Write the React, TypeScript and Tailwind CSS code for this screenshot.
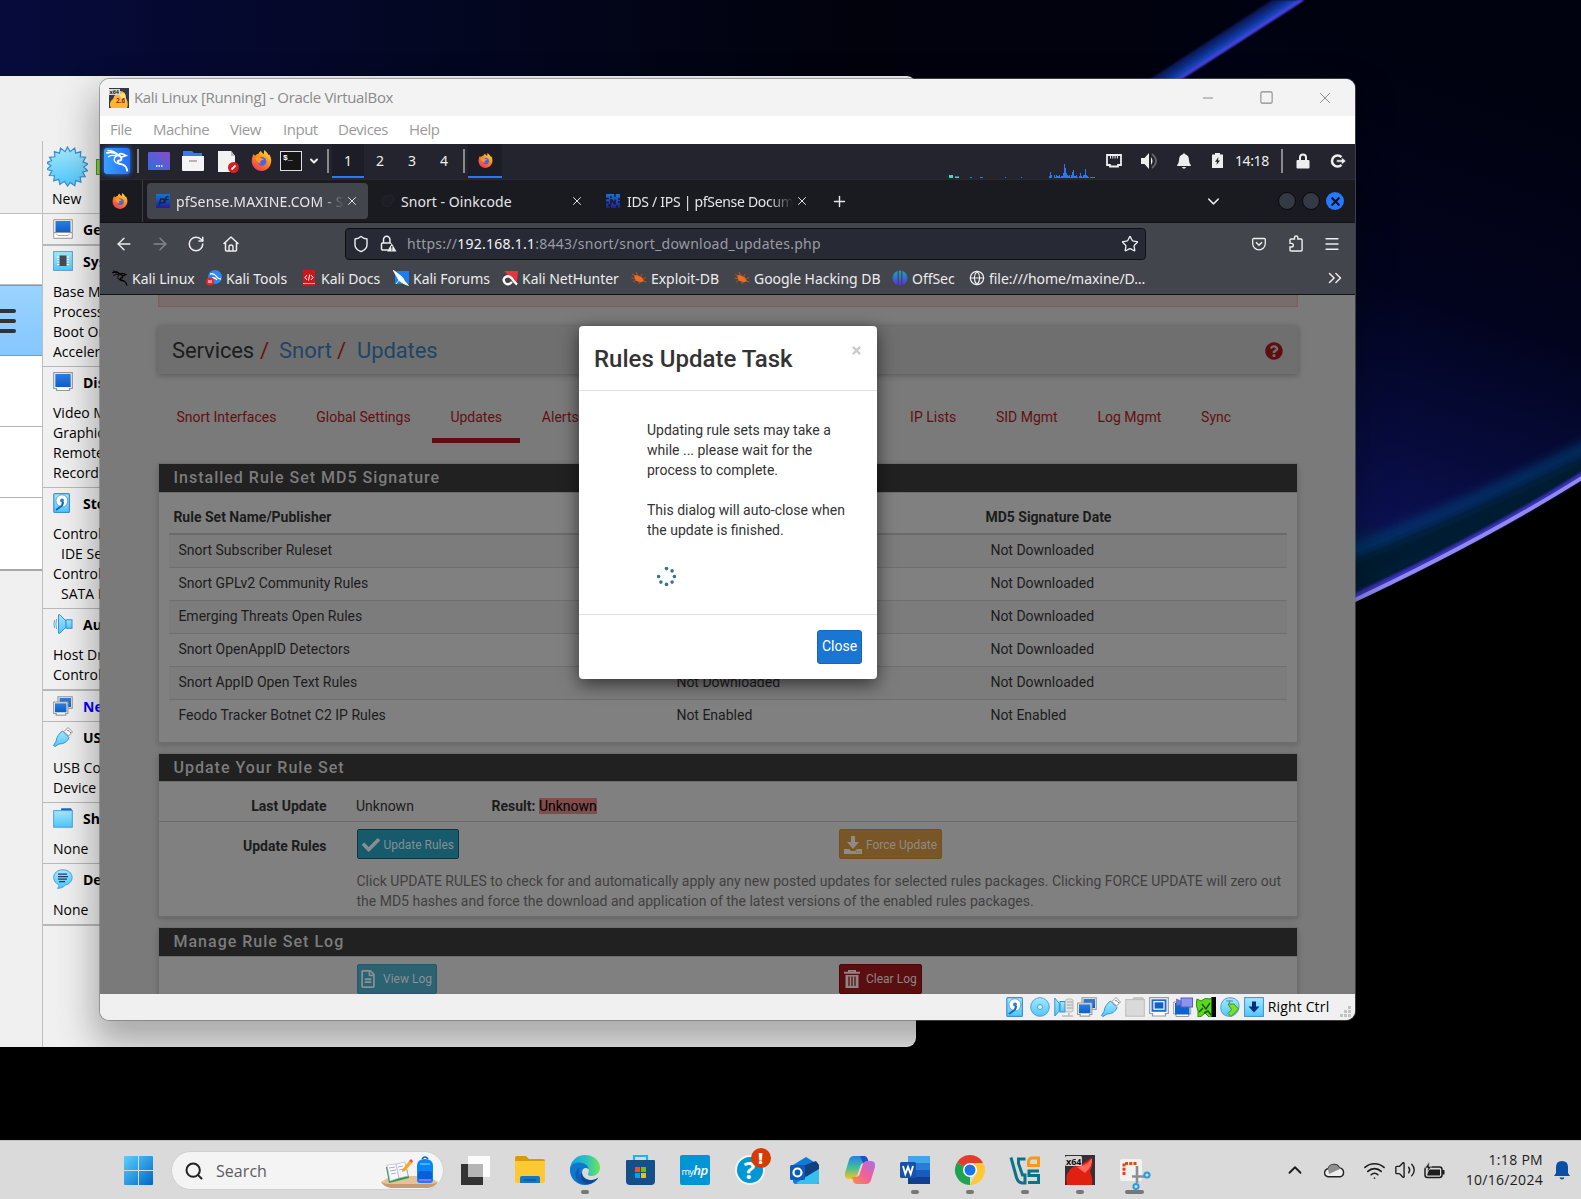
import React from "react";
import {
  ArrowLeft, ArrowRight, RotateCw, House, Shield, Star, ChevronDown, ChevronUp, ChevronsRight,
  Menu, Plus, X, Globe, Minus, Square, Search, Wifi, Volume2,
} from "lucide-react";
import { FaCheck, FaQuestionCircle, FaRegFileAlt } from "react-icons/fa";
import { SiKalilinux } from "react-icons/si";

const segoe = "font-['Open_Sans','Noto_Sans',sans-serif]";
const noto = "font-['Noto_Sans',sans-serif]";
const roboto = "font-['Roboto',sans-serif]";

type P = { className?: string };

/* ---------- colour icons ---------- */

function Gradients() {
  return (
    <svg width="0" height="0" className="absolute">
      <defs>
        <linearGradient id="cy" x1="0" y1="0" x2="0" y2="1"><stop offset="0" stopColor="#a5e8fd" /><stop offset="1" stopColor="#4fc8fb" /></linearGradient>
        <linearGradient id="bl" x1="0" y1="0" x2="0" y2="1"><stop offset="0" stopColor="#2f7fe0" /><stop offset="1" stopColor="#0b5fcc" /></linearGradient>
        <linearGradient id="fx" x1="0.8" y1="0" x2="0.2" y2="1"><stop offset="0" stopColor="#ffdf3a" /><stop offset=".45" stopColor="#ff8a1f" /><stop offset="1" stopColor="#f0305a" /></linearGradient>
        <linearGradient id="pf" x1="0" y1="0" x2="0" y2="1"><stop offset="0" stopColor="#1475cf" /><stop offset="1" stopColor="#241b9a" /></linearGradient>
        <linearGradient id="win" x1="0" y1="0" x2="1" y2="1"><stop offset="0" stopColor="#5ad0fb" /><stop offset="1" stopColor="#0066c8" /></linearGradient>
        <linearGradient id="desk" x1="0" y1="1" x2="1" y2="0"><stop offset="0" stopColor="#2a6fe8" /><stop offset="1" stopColor="#8a4cc0" /></linearGradient>
        <linearGradient id="edge" x1="0" y1="0.3" x2="1" y2="0.3"><stop offset="0" stopColor="#1f9be0" /><stop offset=".55" stopColor="#2bc3c0" /><stop offset="1" stopColor="#6fe452" /></linearGradient>
        <linearGradient id="off" x1="0" y1="0" x2="0" y2="1"><stop offset="0" stopColor="#1aa8b8" /><stop offset="1" stopColor="#5a2fe0" /></linearGradient>
        <linearGradient id="cop1" x1="0" y1="0" x2="0" y2="1"><stop offset="0" stopColor="#2a7de8" /><stop offset=".5" stopColor="#3fbf9a" /><stop offset="1" stopColor="#f6c32c" /></linearGradient>
        <linearGradient id="cop2" x1="1" y1="0" x2="0" y2="1"><stop offset="0" stopColor="#a56ff0" /><stop offset=".5" stopColor="#f0609a" /><stop offset="1" stopColor="#fb8a4a" /></linearGradient>
      </defs>
    </svg>
  );
}

const Firefox = ({ className }: P) => (
  <svg viewBox="0 0 22 22" className={className}>
    <path d="M3 4c.3 1.2.8 1.8 1.400 2C5.500 4.500 7 4 8 4c.3-1.500 1.200-2.500 2.500-3 .4 1.400 1.800 2.500 3 3.300C13.600 2.500 13.500 1.500 14 0c2 1.500 3.500 3.500 4.500 5.500L19 4.500c1.500 2 2.300 4.500 2.200 7C21 17.500 16.500 22 11 22S.8 17.500.8 11.800C.8 9 1.500 6.500 3 4z" fill="url(#fx)" />
    <circle cx="11.500" cy="12" r="4.600" fill="#4f5fe8" />
    <path d="M4 8.500c2.500-1.500 5-1 6.500.2 1 .3 2.300.3 3 .8-.8 1.300-2.500 1-3.500 2-.8 1-.3 2.200.5 3-2.500 0-4.500-2-6.500-6z" fill="#ff9a1f" />
  </svg>
);

const KaliDragon = ({ className }: P) => (
  <svg viewBox="0 0 24 24" className={className} fill="none" stroke="currentColor" strokeLinecap="round">
    <path d="M1 4q7-2 11.500 2.500 3 .5 3.500 3 .5 2.500-2 2.500-3 .5-1 3 3 1 5 1.500 3.500 1.500 4 6" strokeWidth="2" />
    <path d="M2 1.500q6 0 9.500 4M2.500 8q4-2.500 8.500-.5-2.500 1-2.500 4 .5 3.500 6 4" strokeWidth="1.300" />
    <path d="M13 6q2-2 5-.5l3 1.500-4.500 1.500" strokeWidth="1.600" />
  </svg>
);

const SFrame = ({ children, className = "size-5 shrink-0" }: { children: React.ReactNode; className?: string }) => (
  <svg viewBox="0 0 20 20" className={className}>{children}</svg>
);

const IcGeneral = () => <SFrame><path d="M.7 13.500V.7h18.600v12.800" fill="#f6f6f6" stroke="#999" /><rect x="2.500" y="2" width="15" height="11.500" fill="url(#bl)" /><path d="M.7 13.500h18.600v5.800H.7z" fill="#fff" stroke="#999" /><path d="M3 14.500l2 2h10l2-2" stroke="#aaa" fill="none" /></SFrame>;
const IcSystem = () => <SFrame><rect x=".6" y=".6" width="18.800" height="18.800" fill="url(#cy)" stroke="#5a9fd0" /><path d="M4 6h12M4 8.500h12M4 11h12M4 13.500h12" stroke="#fff" strokeWidth="1.200" /><rect x="6.500" y="4.500" width="7" height="10.500" fill="#444b55" /></SFrame>;
const IcDisplay = () => <SFrame><path d="M.7.7h18.600v15.800h-2.800v2H3.500v-2H.7z" fill="#fff" stroke="#999" strokeWidth="1.200" /><rect x="2.300" y="2" width="15.400" height="13" fill="url(#bl)" /></SFrame>;
const IcStorage = () => <SFrame><rect x=".8" y=".6" width="15.600" height="18.800" rx="1" fill="url(#cy)" stroke="#3d8fd8" strokeWidth="1.200" /><path d="M9 1.800a5.800 5.800 0 015.800 6c0 3-1.800 4.500-3.500 6.200L8 13.500a6 6 0 01-5-6C3 4 6 1.800 9 1.800z" fill="#fff" stroke="#5aa8e0" /><circle cx="9" cy="7.500" r="2" fill="#2f7fd0" /><path d="M3 17l3.500-2.500Q10 12.500 10 9" stroke="#1668c0" strokeWidth="2" fill="none" /></SFrame>;
const IcAudio = () => <SFrame><path d="M1.500 6q-1 4 0 8M3.500 5q-1.200 5 0 10" stroke="#5aa8e0" fill="none" /><path d="M5.500.8h1.500l6 6.200v6l-6 6.200H5.500z" fill="url(#cy)" stroke="#3d8fd8" /><rect x="13" y="5.800" width="6" height="8.500" fill="url(#cy)" stroke="#3d8fd8" /></SFrame>;
const IcNetwork = () => <SFrame><rect x="5" y=".8" width="14.200" height="11.500" fill="#fff" stroke="#999" strokeWidth="1.200" /><rect x="6.500" y="2" width="11.500" height="9" fill="url(#bl)" /><path d="M.7 6h14.200v11.500h-2.200v1.700H3.200v-1.700H.7z" fill="#fff" stroke="#999" strokeWidth="1.200" /><rect x="2" y="7.300" width="11.500" height="9" fill="url(#bl)" /></SFrame>;
const IcUsb = () => <SFrame><path d="M11 4.500l4-4L19.500 5l-4 4z" fill="#fff" stroke="#999" /><path d="M9.500 4l6.500 6.500c-1.500 4-5 6.500-10 6.500l-4 2.500-1.500-1L3 14.500C3.500 10 6 6.500 9.500 4z" fill="url(#cy)" stroke="#3d8fd8" /><path d="M14.500 3l1.300 1.300M16.700 4.700l1 1" stroke="#333" /></SFrame>;
const IcFolder = () => <SFrame><path d="M8.500 3V.8h9.500l1 2" fill="#1c5fc0" stroke="#2a70c0" /><rect x=".7" y="2.600" width="18.600" height="16.600" fill="url(#cy)" stroke="#4a9fe0" /></SFrame>;
const IcFolderGrey = () => <SFrame><path d="M8.500 3V.8h9.500l1 2" fill="#ccc" stroke="#bbb" /><rect x=".7" y="2.600" width="18.600" height="16.600" fill="#dadada" stroke="#bdbdbd" /></SFrame>;
const IcDesc = () => <SFrame><path d="M9.800.8c5.300 0 9.300 3.200 9.300 7.700 0 4-3.200 6.800-6.800 7.500-2 2.300-4.300 3.300-7.800 3.300 1.200-1.300 1.500-2.300 1.300-3.800C2.500 14.300.7 11.800.7 8.500.7 4 4.500.8 9.800.8z" fill="url(#cy)" stroke="#4a9fe0" /><path d="M5 5.200h9M5 7.700h10M5 10.200h9M6 12.700h6" stroke="#1d3f6a" strokeWidth="1.200" /></SFrame>;
const IcDisc = () => <SFrame><circle cx="10" cy="10" r="9.300" fill="url(#cy)" stroke="#4a9fe0" /><circle cx="10" cy="10" r="2.500" fill="#dff5ff" stroke="#4a9fe0" /></SFrame>;
const IcAudioMic = () => <SFrame><path d="M.8 1l4.500 5.500V14L.8 19z" fill="url(#cy)" stroke="#3d8fd8" /><rect x="6" y="4.500" width="5" height="10.500" fill="url(#cy)" stroke="#3d8fd8" /><rect x="11.500" y="2" width="7.500" height="13" rx="2" fill="#e2e2e2" stroke="#bbb" /><path d="M13 5h6M13 8h6M13 11h6M8 19h11M15 16v3" stroke="#bbb" strokeWidth="1.500" /></SFrame>;
const IcScreen = () => <SFrame><path d="M.7.7h18.600v15.800h-2.800v2.500H3.500v-2.500H.7z" fill="#fff" stroke="#999" strokeWidth="1.200" /><rect x="2.500" y="2.300" width="15" height="12.500" fill="#1d6fd8" /><rect x="5" y="4.700" width="10" height="7.500" fill="#1060c8" stroke="#fff" strokeWidth="1.200" /></SFrame>;
const IcRecord = () => <SFrame><path d="M.7 5h17v12h-2v2.500H3V17H.7z" fill="#fff" stroke="#999" /><rect x="2" y="6" width="14.500" height="11.500" fill="#0d62cf" /><rect x="8" y="1" width="11.500" height="9" fill="#8a95ee" stroke="#5560c0" /><path d="M8 4L3.500 2v7L8 7.500z" fill="#6a78e0" stroke="#5560c0" strokeWidth=".6" /></SFrame>;
const IcCpu = () => <SFrame><path d="M1 2l4 2q4-4 9-2l3-2v20h-4l-4-4-4 3.500L2 20v-6q-3-6-1-12z" fill="#5ad81e" stroke="#2c8a10" /><path d="M6 7l4 5 4-6M3 15l4-4M8 16l4-2 3 4" stroke="#1a5a0a" strokeWidth="1.500" fill="none" /><rect x="15.500" y="0" width="4.500" height="20" fill="#000" /></SFrame>;
const IcMouse = () => <SFrame><path d="M10 .8c6 0 9 3.500 9 8 0 6-4 10.500-9.500 10.500S.8 16 .8 10.500C.8 5 4 .8 10 .8z" fill="url(#cy)" stroke="#4a9fe0" /><path d="M10 3l-1 4M6 4h7" stroke="#5a8aa8" /><path d="M8 7h6l4.500 5L11 19.500 8 16.500l3.500-4z" fill="#7be02a" stroke="#3c9a18" /></SFrame>;
const IcKey = () => <SFrame><rect x=".6" y=".6" width="18.800" height="18.800" fill="url(#cy)" stroke="#3d8fd8" /><path d="M8 4.500h4v5h3.500L10 15.500 4.500 9.500H8z" fill="#0a2f80" /></SFrame>;

/* ---------- VirtualBox Manager (behind) ---------- */

function Section({ icon, title, blue, rows, h, thick }: { icon: React.ReactNode; title: string; blue?: boolean; rows: string[]; h: string; thick?: boolean }) {
  return (
    <div className={`${h} shrink-0 ${thick ? "border-b-2" : "border-b"} border-[#b8b8b8] pl-[10px] pt-[5px]`}>
      <div className="flex h-[20px] items-center gap-[10px]">
        {icon}
        <span className={`pt-[2px] text-[14px] font-bold leading-5 ${blue ? "text-[#0000ff]" : "text-black"}`}>{title}</span>
      </div>
      <div className="pt-[11px]">
        {rows.map((r, i) => (
          <div key={i} className={`whitespace-nowrap text-[14px] leading-5 text-black ${r.startsWith(" ") ? "pl-2" : ""}`}>{r.trim()}</div>
        ))}
      </div>
    </div>
  );
}

function Manager() {
  return (
    <div className={`absolute left-0 top-[76px] flex h-[971px] w-[916px] overflow-hidden rounded-r-[9px] bg-[#f0f0f0] ${segoe}`}>
      <div className="flex w-[42px] shrink-0 flex-col">
        <div className="h-[137px]" />
        <div className="h-[72px] border-y border-[#bdbdbd] bg-white" />
        <div className="flex h-[71px] flex-col justify-center gap-[6px] border-y border-[#4fa8f0] bg-linear-to-b from-[#9ad3ff] to-[#85c7ff]">
          <div className="h-1 w-4 rounded-r bg-[#333]" />
          <div className="h-1 w-4 rounded-r bg-[#333]" />
          <div className="h-1 w-4 rounded-r bg-[#333]" />
        </div>
        <div className="h-[71px] border-b border-[#b5b5b5] bg-white" />
        <div className="h-[71px] border-b border-[#b5b5b5] bg-white" />
        <div className="h-[73px] border-b-2 border-[#a8a8a8] bg-white" />
      </div>
      <div className="mt-[65px] flex w-[200px] shrink-0 flex-col overflow-hidden border-l border-[#bdbdbd]">
        <div className="h-[73px] shrink-0 border-b border-[#bdbdbd] pl-[4px] pt-[5px]">
          <div className="flex items-center">
            <svg viewBox="0 0 40 40" className="size-[41px]">
              <path d="M20 1l2.500 4.500L27 2l1 5 5-1.500-.5 5 5.200.5-2.500 4.500 4.800 2-4.200 3 4 3.500-5 1.500 2.500 4.500-5 .2.800 5-5-1.500-1 5-4.500-3L20 39l-3-4.500-4.500 3-1-5-5 1.500.8-5-5-.2 2.500-4.500-5-1.500 4-3.500-4.200-3 4.800-2L2.500 11l5.200-.5-.5-5 5 1.500 1-5 4.500 3.500z" fill="url(#cy)" stroke="#3a8fd0" strokeWidth="1.200" />
            </svg>
            <div className="ml-[8px] h-4 w-5 border border-[#4a9a1a] bg-[#8ada3a]" />
          </div>
          <div className="pl-[5px] pt-[2px] text-[14px] leading-5 text-black">New</div>
        </div>
        <Section h="h-[32px] overflow-hidden" thick icon={<IcGeneral />} title="General" rows={[]} />
        <Section h="h-[121px]" icon={<IcSystem />} title="System" rows={["Base Memory:", "Processors:", "Boot Order:", "Acceleration:"]} />
        <Section h="h-[121px]" icon={<IcDisplay />} title="Display" rows={["Video Memory:", "Graphics", "Remote", "Recording"]} />
        <Section h="h-[121px]" icon={<IcStorage />} title="Storage" rows={["Controller", " IDE Secondary", "Controller", " SATA Port 0"]} />
        <Section h="h-[82px]" thick icon={<IcAudio />} title="Audio" rows={["Host Driver:", "Controller"]} />
        <Section h="h-[31px] overflow-hidden" icon={<IcNetwork />} title="Network" blue rows={[]} />
        <Section h="h-[81px]" icon={<IcUsb />} title="USB" rows={["USB Controller", "Device Filters"]} />
        <Section h="h-[61px]" icon={<IcFolder />} title="Shared" rows={["None"]} />
        <Section h="h-[62px]" thick icon={<IcDesc />} title="Description" rows={["None"]} />
      </div>
    </div>
  );
}

/* ---------- Kali guest ---------- */

const bars: [number, number][] = [
  [0, 2], [1, 6], [2, 3], [5, 3], [6, 1], [7, 3], [8, 2], [9, 2], [10, 3], [11, 1], [12, 2], [13, 2], [14, 5], [15, 14], [16, 10], [17, 5], [18, 3], [19, 2], [20, 3], [21, 1], [22, 3], [23, 6], [24, 8], [25, 2], [26, 2], [27, 3], [28, 1], [30, 2], [31, 5], [32, 2], [33, 1], [34, 3], [35, 3], [36, 9], [37, 3], [38, 2], [39, 1], [41, 1], [42, 1], [43, 1], [44, 1], [45, 1],
];

function KaliPanel() {
  return (
    <div className={`flex h-9 shrink-0 items-center border-b border-[#2b2b2e] bg-[#23242d] pb-[2px] text-[14px] text-[#eee] ${noto}`}>
      <div className="ml-1 grid size-[26px] place-items-center rounded-[3px] bg-linear-to-r from-[#3aa0ff] to-[#2370f8] shadow-[0_0_5px_#2f7dff]"><KaliDragon className="size-[23px] text-white" /></div>
      <div className="ml-[7px] h-6 w-[2px] bg-[#8a8a8c]" />
      <svg viewBox="0 0 22 18" className="ml-[9px] h-[18px] w-[22px]"><rect width="22" height="18" rx="1" fill="url(#desk)" /><path d="M8 14h1.500M10.500 14H12M13 14h1.500" stroke="#fff" strokeWidth="1.500" /></svg>
      <svg viewBox="0 0 22 20" className="ml-3 h-5 w-[22px]"><path d="M1 0h9l2 2h8v4H1z" fill="#2f7bf0" /><path d="M0 5h22v14q0 1-1 1H1q-1 0-1-1z" fill="#f4f4f4" /><path d="M7 10h8" stroke="#b5b5b5" strokeWidth="1.800" /></svg>
      <svg viewBox="0 0 22 23" className="ml-[14px] mt-1 h-[23px] w-[22px]"><path d="M0 0h13l4 5v16H0z" fill="#f2f2f2" /><path d="M13 0v5h4z" fill="#bbb" /><circle cx="15.500" cy="16.500" r="5.500" fill="#d81e1e" /><path d="M13.500 18.500l4-4" stroke="#fff" strokeWidth="1.800" /></svg>
      <Firefox className="ml-[11px] size-[21px]" />
      <div className="ml-2 h-5 w-[22px] border border-[#ddd] bg-[#151515] pl-[2px] font-['Liberation_Mono',monospace] text-[8px] font-bold leading-[12px] text-white">$_</div>
      <ChevronDown className="ml-[6px] size-[12px] text-[#eee]" strokeWidth={4} />
      <div className="ml-[7px] h-6 w-[2px] bg-[#8a8a8c]" />
      <div className="ml-[3px] h-[34px] w-8 self-start border-b-2 border-[#2777ff] bg-[#1c1d27] text-center leading-[33px]">1</div>
      <div className="w-8 text-center">2</div>
      <div className="w-8 text-center">3</div>
      <div className="w-8 text-center">4</div>
      <div className="ml-[3px] h-6 w-[2px] bg-[#8a8a8c]" />
      <div className="ml-[3px] flex h-[34px] w-[34px] items-center self-start border-b-2 border-[#2777ff] bg-[#1c1d27] pl-[10px]"><Firefox className="size-[15px]" /></div>
      <svg viewBox="0 0 150 30" className="ml-[446px] mt-1 h-[30px] w-[150px] self-start">
        <path d="M1 27h4v3H1zM7 28.500h4V30H7z" fill="#10f0c8" />
        <path d="M22 29h2v1h-2zM32 29h3v1h-3zM57 29h1v1h-1zM73 29h1v1h-1z" fill="#2777ff" />
        {bars.map(([x, h]) => <rect key={x} x={101 + x} y={30 - h} width="1" height={h} fill="#2777ff" />)}
      </svg>
      <svg viewBox="0 0 16 14" className="ml-[8px] h-[14px] w-4"><path d="M1 1h14v10h-3v1.500H4V11H1z" fill="none" stroke="#eee" strokeWidth="1.800" /><path d="M4.500 2v2.500M6.800 2v2.500M9.100 2v2.500M11.400 2v2.500" stroke="#eee" /></svg>
      <svg viewBox="0 0 18 16" className="ml-[19px] h-4 w-[18px]"><path d="M0 5h3.500L8 0v16l-4.500-5H0z" fill="#eee" /><path d="M10 4q3 4 0 8z" fill="#eee" /><path d="M11 1q8 7 0 14" fill="none" stroke="#66676c" strokeWidth="1.800" /></svg>
      <svg viewBox="0 0 14 16" className="ml-[18px] h-4 w-[14px]"><path d="M6 1.200a1 1 0 012 0Q11.800 2 12 7q.1 3.500 1.800 5v1H.2v-1Q1.900 10.500 2 7q.2-5 4-5.800zM5 14h4q-.5 1.800-2 1.800T5 14z" fill="#eee" /></svg>
      <svg viewBox="0 0 11 15" className="ml-[21px] h-[15px] w-[11px]"><path d="M3 0h5v1.500h3V15H0V1.500h3z" fill="#eee" /><path d="M6.500 4L3 8.800h2L4.500 12 8 7.500H6z" fill="#23242d" /></svg>
      <span className="ml-3 w-9 tracking-[-0.4px]">14:18</span>
      <div className="ml-[10px] h-6 w-[2px] bg-[#8a8a8c]" />
      <svg viewBox="0 0 14 16" className="ml-[13px] h-4 w-[14px]"><path d="M4 8V4.500a3 3 0 016 0V8" fill="none" stroke="#eee" strokeWidth="2" /><rect x=".5" y="7" width="13" height="8.500" rx="1" fill="#eee" /></svg>
      <svg viewBox="0 0 16 14" className="ml-[20px] h-[14px] w-4"><path d="M11.500 3.200a5.500 5.500 0 100 7.600" fill="none" stroke="#eee" strokeWidth="2.600" /><path d="M6.500 5.800h5V3.200L16 7l-4.500 3.800V8.200h-5z" fill="#eee" stroke="#23242d" strokeWidth=".6" /></svg>
    </div>
  );
}

const PfIcon = ({ n }: { n?: boolean }) => (
  <svg viewBox="0 0 14 14" className="size-[14px] shrink-0"><rect width="14" height="14" fill="url(#pf)" />
    {n ? <path d="M0 4.500h3M0 8.500h3M4 14v-3H2M5 10.500V5M9 10.500V5.500M5 5.500l4 4.500M5 2v2M9 0v3M12 8h2M12 5h2M11 11v3" fill="none" stroke="#1a1b20" strokeWidth="1.500" /> : <path d="M3 11.500l1.700-6.500h2q2 0 1.500 2t-2.500 2H4.500M8.500 9.500L9.800 4q.5-1.800 2.700-1.500M8.500 5.500h4" fill="none" stroke="#0e2440" strokeWidth="1.300" />}
  </svg>
);

function TabBar() {
  return (
    <div className={`flex h-[43px] shrink-0 items-center border-b border-[#101114] bg-[#1a1b20] text-[14px] text-[#e6e6e8] ${noto}`}>
      <Firefox className="ml-3 size-4" />
      <div className="ml-[14px] h-full w-px bg-[#3c3d42]" />
      <div className="ml-1 flex h-9 w-[221px] items-center rounded bg-[#43454c] pl-[9px]">
        <PfIcon />
        <div className="ml-[6px] w-[169px] overflow-hidden whitespace-nowrap tracking-[0.17px] [mask-image:linear-gradient(to_right,#000_84%,transparent)]">pfSense.MAXINE.COM - Services</div>
        <X className="size-[14px]" strokeWidth={1.7} />
      </div>
      <svg viewBox="0 0 16 16" className="ml-[12px] size-4"><path d="M2 8q0-6 6-5 3-3 5 1 3 4-1 5-2 6-6 4-4 0-4-5z" fill="#1e1e22" stroke="#26262a" /></svg>
      <div className="ml-[5px] w-[169px] tracking-[0.05px]">Snort - Oinkcode</div>
      <X className="size-[14px]" strokeWidth={1.7} />
      <div className="ml-[22px]"><PfIcon n /></div>
      <div className="ml-[7px] w-[168px] overflow-hidden whitespace-nowrap tracking-[-0.3px] [mask-image:linear-gradient(to_right,#000_84%,transparent_99%)]">IDS / IPS | pfSense Documentation</div>
      <X className="size-[14px]" strokeWidth={1.7} />
      <Plus className="ml-[22px] size-[17px]" strokeWidth={2} />
      <ChevronDown className="ml-[356px] size-[19px]" strokeWidth={1.8} />
      <div className="ml-[55px] size-[18px] rounded-full border border-[#08090c] bg-[#333945]" />
      <div className="ml-[6px] size-[18px] rounded-full border border-[#08090c] bg-[#333945]" />
      <div className="ml-[6px] grid size-[18px] place-items-center rounded-full bg-[#2777ff]"><X className="size-[13px] text-[#0c1322]" strokeWidth={4} /></div>
    </div>
  );
}

const Exploit = () => <svg viewBox="0 0 16 16" className="size-4"><path d="M3 5.500l3-.5 5 2.500 2 3.500-3.500 1.500-5-2z" fill="#f26a1b" /><path d="M1 4l3 2M5 2l1.500 3M11 4L9.500 7M.5 8L4 8.500M2 12l3-2M8 14l.5-2.500M12 11l3.500 1M12 9l3-1.500" stroke="#c2581f" strokeWidth=".9" /></svg>;

const bookmarks: { w: string; icon: React.ReactNode; label: string }[] = [
  { w: "w-[94px]", label: "Kali Linux", icon: <KaliDragon className="size-4 text-black" /> },
  { w: "w-[95px]", label: "Kali Tools", icon: <svg viewBox="0 0 16 16" className="size-4"><circle cx="9" cy="7" r="7" fill="#2f86f5" /><path d="M4 4q4-1 6 2t5 3M6 8q3-1 5 2" stroke="#fff" strokeWidth="1.300" fill="none" /><circle cx="4" cy="11.500" r="4" fill="#e02a2a" /><path d="M3 10v3M5 10v3" stroke="#fff" /></svg> },
  { w: "w-[92px]", label: "Kali Docs", icon: <svg viewBox="0 0 16 16" className="size-4"><rect x="2" y="0" width="12" height="16" fill="#d01616" /><path d="M6 5L4 7.500 6 10M10 5l2 2.500-2 2.500M8.700 4.500l-1.200 6" stroke="#fff" fill="none" /><path d="M2 13.500h12" stroke="#eee" strokeWidth=".7" /></svg> },
  { w: "w-[109px]", label: "Kali Forums", icon: <svg viewBox="0 0 16 16" className="size-4"><rect x="2" y="1" width="14" height="13" fill="#1b7df0" /><path d="M0 0l8 6q3 3 3.500 5l4 4.500-4-1.500Q5 11 4 7zM3 14l4-5" fill="#fff" stroke="#fff" strokeWidth=".8" /></svg> },
  { w: "w-[129px]", label: "Kali NetHunter", icon: <svg viewBox="0 0 16 16" className="size-4"><path d="M2 1h14l-1 10L12 14 4 3z" fill="#e83440" /><path d="M15 14.500Q12 12 10 8.500 7 5 3.500 7T3 13q3 3 7-1" stroke="#fff" strokeWidth="2.400" fill="none" /></svg> },
  { w: "w-[103px]", label: "Exploit-DB", icon: <Exploit /> },
  { w: "w-[158px]", label: "Google Hacking DB", icon: <Exploit /> },
  { w: "w-[77px]", label: "OffSec", icon: <svg viewBox="0 0 16 16" className="size-4"><circle cx="8" cy="8" r="7.500" fill="url(#off)" /><path d="M6.200 0v16M9.800 0v16" stroke="#43454c" strokeWidth="1.200" /></svg> },
  { w: "w-[180px]", label: "file:///home/maxine/D…", icon: <Globe className="size-4 text-[#eee]" strokeWidth={1.8} /> },
];

function NavBar() {
  return (
    <div className={`flex h-[72px] shrink-0 flex-col border-b border-[#0f1014] bg-[#43454c] text-[14px] text-[#ececee] ${noto}`}>
      <div className="flex h-10 items-center pt-[2px]">
        <ArrowLeft className="ml-[14px] size-5" strokeWidth={1.700} />
        <ArrowRight className="ml-4 size-5 text-[#85868b]" strokeWidth={1.700} />
        <RotateCw className="ml-[17px] size-[18px]" strokeWidth={2} />
        <svg viewBox="0 0 16 16" className="ml-[18px] size-4"><path d="M1 7.500L8 1l7 6.500M2.500 6.500V14q0 1 1 1h9q1 0 1-1V6.500" fill="none" stroke="#eee" strokeWidth="1.500" strokeLinejoin="round" strokeLinecap="round" /><path d="M6 15v-4a2 2 0 014 0v4" fill="none" stroke="#eee" strokeWidth="1.400" /></svg>
        <div className="ml-[106px] flex h-8 w-[801px] items-center rounded border border-[#0f1014] bg-[#272a35]">
          <Shield className="ml-[6px] size-[18px]" strokeWidth={1.900} />
          <svg viewBox="0 0 17 17" className="ml-[10px] size-[17px]"><path d="M3.500 8V4.500a3.200 3.200 0 016.400 0V8M8 15H2.500q-1 0-1-1V9q0-1 1-1H10q1 0 1 .8" fill="none" stroke="#eee" strokeWidth="1.500" /><path d="M11.800 8.500l4.700 8H7z" fill="#eee" /><path d="M11.800 11v2.700M11.800 14.500v1" stroke="#272a35" strokeWidth="1.200" /></svg>
          <span className="ml-[10px] tracking-[0.25px] text-[#9a9ba3]">https://<span className="text-[#f4f4f6]">192.168.1.1</span>:8443/snort/snort_download_updates.php</span>
          <Star className="ml-auto mr-[6px] size-[18px]" strokeWidth={1.800} />
        </div>
        <svg viewBox="0 0 14 14" className="ml-[106px] size-[14px]"><path d="M1.700 1.500h10.600q1 0 1 1V6.500a6.200 6.200 0 01-12.600 0V2.500q0-1 1-1z" fill="none" stroke="#eee" strokeWidth="1.300" /><path d="M4 5.300l3 3 3-3" fill="none" stroke="#eee" strokeWidth="1.500" /></svg>
        <svg viewBox="0 0 16 17" className="ml-[22px] h-[17px] w-4"><path d="M2 6.500V5q0-1 1-1h3.500V2.700a1.700 1.700 0 013.400 0V4h3.200q1 0 1 1v10q0 1-1 1H3q-1 0-1-1v-3h1.500a1.800 1.800 0 000-3.600H2z" fill="none" stroke="#eee" strokeWidth="1.400" /></svg>
        <Menu className="ml-[19px] size-[18px]" strokeWidth={1.800} />
      </div>
      <div className="flex h-8 items-center pl-3">
        {bookmarks.map((b) => (
          <div key={b.label} className={`flex shrink-0 items-center gap-1 whitespace-nowrap tracking-[-0.04px] ${b.w}`}>
            <span className="grid size-4 place-items-center">{b.icon}</span>{b.label}
          </div>
        ))}
        <ChevronsRight className="ml-auto mr-[9px] size-[22px]" strokeWidth={1.600} />
      </div>
    </div>
  );
}

/* ---------- pfSense page, dimmed by the modal backdrop ---------- */

const tabs = ["Snort Interfaces", "Global Settings", "Updates", "Alerts", "Blocked", "Pass Lists", "Suppress", "IP Lists", "SID Mgmt", "Log Mgmt", "Sync"];
const rules: [string, string][] = [
  ["Snort Subscriber Ruleset", "Not Downloaded"],
  ["Snort GPLv2 Community Rules", "Not Downloaded"],
  ["Emerging Threats Open Rules", "Not Downloaded"],
  ["Snort OpenAppID Detectors", "Not Downloaded"],
  ["Snort AppID Open Text Rules", "Not Downloaded"],
  ["Feodo Tracker Botnet C2 IP Rules", "Not Enabled"],
];

function Panel({ title, h, hh, children }: { title: string; h: string; hh: string; children: React.ReactNode }) {
  return (
    <div className={`${h} mb-[10px] shrink-0 overflow-hidden border border-[#6d6d6d] bg-[#808080] shadow-[0_2px_6px_rgba(0,0,0,0.18)]`}>
      <div className={`${hh} flex items-center border-b border-[#6d6d6d] bg-[#212121] pl-[14.500px] text-[16px] font-medium tracking-[1px] text-[#7c7c7c]`}>{title}</div>
      {children}
    </div>
  );
}

function PfPage() {
  return (
    <div className={`relative h-[699px] shrink-0 overflow-hidden bg-[#7a7a7a] text-[14px] text-[#1c1c1c] ${roboto}`}>
      <div className="ml-[58px] flex w-[1140px] flex-col">
        <div className="h-3 shrink-0 border border-t-0 border-[#755f5f] bg-[#796c6c]" />
        <div className="mt-[19px] flex h-12 items-center bg-[#6f6f6f] pl-[14px] pr-[15px] text-[22px] shadow-[0_1px_6px_rgba(0,0,0,0.3)]">
          <span className="w-[88px] tracking-[-0.1px]">Services</span>
          <span className="w-[19px] text-[#6b1010]">/</span>
          <span className="w-[58px] text-[#1f4565]">Snort</span>
          <span className="w-5 text-[#6b1010]">/</span>
          <span className="tracking-[-0.1px] text-[#1f4565]">Updates</span>
          <FaQuestionCircle className="ml-auto mt-[2px] size-[18px] text-[#5e0e10]" />
        </div>
        <div className="flex h-[69px] gap-[3px] text-[#611012]">
          {tabs.map((t) => (
            <div key={t} className={`shrink-0 whitespace-nowrap px-[18.400px] pt-[33px] leading-5 ${t === "Updates" ? "border-b-[5px] border-[#5e0e10]" : ""}`}>{t}</div>
          ))}
        </div>
        <div className="h-5" />
        <Panel title="Installed Rule Set MD5 Signature" h="h-[280px]" hh="h-[29px]">
          <div className="mx-[10px] pt-[9px]">
            <div className="flex h-[33px] items-center border-b-2 border-[#6b6b6b] pl-[4.400px] font-bold">
              <span className="w-[499px]">Rule Set Name/Publisher</span>
              <span className="w-[313px]">MD5 Signature Hash</span>
              <span>MD5 Signature Date</span>
            </div>
            {rules.map(([n, s], i) => (
              <div key={n} className={`flex h-[33px] items-center pb-[2px] pl-[9.400px] ${i % 2 ? "" : "bg-[#7c7c7c]"} ${i < 5 ? "border-b border-[#6f6f6f]" : ""}`}>
                <span className="w-[498px]">{n}</span>
                <span className="w-[314px]">{s}</span>
                <span>{s}</span>
              </div>
            ))}
          </div>
        </Panel>
        <Panel title="Update Your Rule Set" h="h-[164px]" hh="h-[28px]">
          <div className="flex h-[40px] items-center border-b border-[#6d6d6d] pt-[9px]">
            <span className="w-[167.500px] text-right font-bold">Last Update</span>
            <span className="w-[136px] pl-[29.500px]">Unknown</span>
            <span className="ml-[29px]"><b>Result:</b> <span className="bg-[#814c4b] text-black">Unknown</span></span>
          </div>
          <div className="flex">
            <span className="w-[167.500px] pt-[14px] text-right font-bold leading-5">Update Rules</span>
            <div className="pl-[30px] pt-[7px]">
              <div className="flex">
                <div className="flex w-[482.500px]">
                  <div className="flex h-[30px] w-[102px] items-center gap-1 rounded-[2px] border border-[#0a3646] bg-[#175a6c] pl-[4px] pt-px text-[12px] text-[#858f92]"><FaCheck className="size-[18px]" />Update Rules</div>
                </div>
                <div className="flex h-[30px] w-[103px] items-center gap-1 rounded-[2px] border border-[#74501f] bg-[#785628] pl-1 pt-px text-[12px] text-[#8f8b84]">
                  <svg viewBox="0 0 18 18" className="size-[18px]"><path d="M7 0h4v6h4l-6 7-6-7h4z" fill="currentColor" /><path d="M0 13h5l2 2h4l2-2h5v5H0z" fill="currentColor" /><path d="M12 16h1M14.500 16h1" stroke="#785628" /></svg>
                  Force Update
                </div>
              </div>
              <div className="mt-3 w-[930px] leading-5 text-[#404040]">Click UPDATE RULES to check for and automatically apply any new posted updates for selected rules packages. Clicking FORCE UPDATE will zero out the MD5 hashes and force the download and application of the latest versions of the enabled rules packages.</div>
            </div>
          </div>
        </Panel>
        <Panel title="Manage Rule Set Log" h="h-[90px]" hh="h-[29px]">
          <div className="flex pl-[198px] pt-[7px]">
            <div className="flex w-[482px]">
              <div className="flex h-[30px] w-[80px] items-center gap-[8px] rounded-[2px] border border-[#235769] bg-[#2d6272] pl-[3px] text-[12px] text-[#879195]"><FaRegFileAlt className="h-[18px] w-[14px]" />View Log</div>
            </div>
            <div className="flex h-[30px] w-[83px] items-center gap-[6px] rounded-[2px] border border-[#4a0808] bg-[#5b0e0f] pl-1 text-[12px] text-[#8f8585]">
              <svg viewBox="0 0 16 18" className="h-[18px] w-4"><path d="M5 2V.6h6V2M0 2.800h16" stroke="currentColor" strokeWidth="2" fill="none" /><path d="M1.500 5h13v13h-13z" fill="currentColor" /><path d="M5 6.500v9.500M8 6.500v9.500M11 6.500v9.500" stroke="#5b0e0f" strokeWidth="1.300" /></svg>
              Clear Log
            </div>
          </div>
        </Panel>
      </div>
      <Dialog />
    </div>
  );
}

function Dialog() {
  const dots = [[9, 1.500], [14.300, 3.700], [16.500, 9], [14.300, 14.300], [9, 16.500], [3.700, 14.300], [1.500, 9]];
  return (
    <div className="absolute left-[479px] top-[31px] flex h-[353px] w-[298px] flex-col rounded-[4px] bg-white text-[#333] shadow-[0_5px_18px_rgba(0,0,0,0.6)]">
      <div className="flex h-[65px] justify-between border-b border-[#e2e2e2] pl-[15px] pr-4">
        <h2 className="pt-[15px] text-[24px] font-medium leading-9">Rules Update Task</h2>
        <svg viewBox="0 0 10 10" className="mt-[20px] size-[9px]"><path d="M1 1l8 8M9 1L1 9" stroke="#cbcbcb" strokeWidth="2.600" /></svg>
      </div>
      <div className="h-[223px] pl-[68px] pt-[29px] leading-5">
        <p className="whitespace-pre">{"Updating rule sets may take a\nwhile ... please wait for the\nprocess to complete."}</p>
        <p className="mt-5 whitespace-pre">{"This dialog will auto-close when\nthe update is finished."}</p>
        <svg viewBox="0 0 18 18" className="ml-[10px] mt-[27px] size-[19px]">{dots.map(([x, y], i) => <circle key={i} cx={x} cy={y} r="1.700" fill="#3b7391" />)}</svg>
      </div>
      <div className="flex h-[65px] justify-end border-t border-[#e2e2e2] pr-[15px] pt-[15px]">
        <button className="h-[34px] w-[45px] rounded-[3px] border border-[#1a62b4] bg-[#1976d2] pb-[1px] text-[14px] text-white">Close</button>
      </div>
    </div>
  );
}

function StatusBar() {
  return (
    <div className={`flex h-[27px] shrink-0 items-center gap-[3.800px] bg-[#f0f0f0] pb-[2px] pl-[906px] text-[14px] text-black ${segoe}`}>
      <IcStorage /><IcDisc /><IcAudioMic /><IcNetwork /><IcUsb /><IcFolderGrey /><IcScreen /><IcRecord /><IcCpu /><IcMouse /><IcKey />
      <span className="whitespace-nowrap tracking-[0.15px]">Right Ctrl</span>
      <svg viewBox="0 0 12 12" className="ml-auto mr-[3px] mt-[11px] size-3"><path d="M8 0h3v3H8zM4 4h3v3H4zM8 4h3v3H8zM0 8h3v3H0zM4 8h3v3H4zM8 8h3v3H8z" fill="#c3c3c3" /></svg>
    </div>
  );
}

const VmIcon = () => (
  <svg viewBox="0 0 20 20" className="size-5"><rect width="20" height="20" fill="#333a44" /><path d="M2 20q-3-6 2-9 2-6 7-8 6 0 6 7 3 5 1 10z" fill="#ffb52e" /><path d="M10 7q3-3 6-1 1 4 1 9z" fill="#ffe08a" /><rect x="0" y="1" width="11" height="6" fill="#d8d8d8" /><text x=".5" y="6" fontSize="5.500" fontWeight="700" fill="#222" fontFamily="Open Sans">x64</text><text x="7" y="15" fontSize="6.500" fontWeight="700" fill="#8a2a10" fontFamily="Open Sans">2.6</text></svg>
);

function VmWindow() {
  return (
    <div className="absolute left-[100px] top-[79px] flex h-[941px] w-[1255px] flex-col overflow-hidden rounded-[9px] bg-[#f0f0f0] shadow-[0_0_0_1px_rgba(110,110,110,0.55),0_18px_36px_6px_rgba(0,0,0,0.3)]">
      <div className={`flex h-[37px] shrink-0 items-center bg-[#f3f3f3] pl-[9px] text-[15px] text-[#8a8a8a] ${segoe}`}>
        <VmIcon />
        <span className="ml-[5px] tracking-[-0.34px]">Kali Linux [Running] - Oracle VirtualBox</span>
        <Minus className="ml-auto size-[16px]" strokeWidth={1.500} />
        <Square className="ml-[43px] size-[15px]" strokeWidth={1.700} />
        <X className="ml-[42px] mr-[21px] size-[18px]" strokeWidth={1.300} />
      </div>
      <div className={`flex h-7 shrink-0 items-center bg-white pb-[2px] pl-[10px] text-[15px] tracking-[-0.48px] text-[#9a9a9a] ${segoe}`}>
        <span className="w-[43px]">File</span><span className="w-[77px]">Machine</span><span className="w-[53px]">View</span><span className="w-[55px]">Input</span><span className="w-[71px]">Devices</span><span>Help</span>
      </div>
      <KaliPanel />
      <TabBar />
      <NavBar />
      <PfPage />
      <StatusBar />
    </div>
  );
}

/* ---------- desktop ---------- */

function Wallpaper() {
  return (
    <svg viewBox="0 0 1581 1140" className="absolute left-0 top-0 h-[1140px] w-[1581px]">
      <defs>
        <linearGradient id="tl" x1="0" y1="0" x2="1" y2="0"><stop offset="0" stopColor="#060b3c" /><stop offset=".3" stopColor="#040724" /><stop offset=".65" stopColor="#01020c" /><stop offset="1" stopColor="#010210" /></linearGradient>
        <linearGradient id="nv" gradientUnits="userSpaceOnUse" x1="1520" y1="100" x2="1370" y2="560"><stop offset="0" stopColor="#010210" /><stop offset=".45" stopColor="#02041e" /><stop offset=".75" stopColor="#070b3c" /><stop offset=".92" stopColor="#0b1152" /><stop offset="1" stopColor="#04234a" /></linearGradient>
        <linearGradient id="st" gradientUnits="userSpaceOnUse" x1="1218" y1="24" x2="1236" y2="52"><stop offset="0" stopColor="#0a1a70" stopOpacity="0" /><stop offset=".55" stopColor="#10359a" /><stop offset=".85" stopColor="#1d5ce8" /><stop offset="1" stopColor="#5a34d8" /></linearGradient>
        <filter id="b3" x="-20%" y="-20%" width="140%" height="140%"><feGaussianBlur stdDeviation="6" /></filter>
        <filter id="b1" x="-20%" y="-20%" width="140%" height="140%"><feGaussianBlur stdDeviation="1" /></filter>
      </defs>
      <rect width="1581" height="1140" fill="#000" />
      <rect width="1320" height="90" fill="url(#tl)" />
      <path d="M1303 0H1581V480Q1470 550 1340 608V79L1180 82z" fill="url(#nv)" />
      <path d="M1272 0h32L1174 84h-32z" fill="url(#st)" filter="url(#b1)" />
      <path d="M1303 -1L1174 82" stroke="#5a3be0" strokeWidth="2.500" filter="url(#b1)" />
      <path d="M1600 464Q1480 524 1340 580" stroke="#031a33" strokeWidth="34" fill="none" filter="url(#b3)" />
      <path d="M1600 440Q1480 500 1340 556" stroke="#04427c" strokeWidth="8" fill="none" filter="url(#b3)" />
      <path d="M1581 480Q1470 550 1340 608V640H1581z" fill="#000" />
      <path d="M1585 474Q1480 540 1340 604" stroke="#3a30b8" strokeWidth="7" fill="none" filter="url(#b1)" />
      <path d="M1585 476Q1480 542 1340 607" stroke="#8f8af0" strokeWidth="4" fill="none" />
    </svg>
  );
}

const TaskItem = ({ children, dot }: { children: React.ReactNode; dot?: string }) => (
  <div className="flex w-[55px] shrink-0 flex-col items-center pt-[12px]">
    <div className="flex h-[34px] items-center justify-center">{children}</div>
    {dot && <div className={`${dot} mt-[3px] h-1 rounded-full bg-[#777]`} />}
  </div>
);
const I = ({ children }: { children: React.ReactNode }) => <svg viewBox="0 0 30 30" className="size-[30px] overflow-visible">{children}</svg>;

function Taskbar() {
  return (
    <div className={`absolute left-0 top-[1140px] flex h-[59px] w-[1581px] border-t border-[#c2c2c2] bg-[#dadada] ${segoe}`}>
      <svg viewBox="0 0 29 29" className="ml-[124px] mt-[15px] size-[29px]"><path d="M0 1q0-1 1-1h13v14H0zM15 0h13q1 0 1 1v13H15zM0 15h14v14H1q-1 0-1-1zM15 15h14v13q0 1-1 1H15z" fill="url(#win)" /></svg>
      <div className="ml-[18px] mt-[10px] flex h-[39px] w-[273px] items-center rounded-full border border-[#cfcfcf] bg-[#f4f4f4] pl-[12px]">
        <Search className="size-[20px] text-[#222]" strokeWidth={2.400} />
        <span className="ml-[12px] pt-px text-[16px] tracking-[0.05px] text-[#5c5c5c]">Search</span>
        <svg viewBox="0 0 57 32" className="ml-auto mr-[5px] mt-[2px] h-8 w-[57px]">
          <path d="M0 26l10-6h37l10 6q-3 4-10 5H10Q3 30 0 26z" fill="#e6c29a" /><path d="M0 26q3 2 10 2h37q7 0 10-2-3 5-10 6H10Q3 31 0 26z" fill="#c99a70" />
          <path d="M5 11l20-3 3 14-20 5z" fill="#2f9a4a" /><path d="M6 9l9-1 3 14-9 3zM15 8l9-2 3 14-9 2z" fill="#fafaff" stroke="#b8b8d0" strokeWidth=".7" /><path d="M8 12l6-1M9 15l6-1M10 18l5-1M17 11l5-1M18 14l5-1" stroke="#9a9ab8" strokeWidth=".8" />
          <path d="M21 14l7-9 3 2-7 8-3 1z" fill="#f9a825" /><path d="M28 5l2-2 2 2-1 2z" fill="#e8504a" />
          <path d="M36 10q0-7 8-7t8 7v14q0 3-3 3H39q-3 0-3-3z" fill="#0a84f8" /><path d="M41 3q3-4 6 0" stroke="#0a60c8" strokeWidth="1.500" fill="none" /><rect x="37" y="15" width="14" height="9" rx="3" fill="#0660d8" /><path d="M39 8h10" stroke="#60c0ff" strokeWidth="1.500" /><path d="M38 24h12" stroke="#9a6af0" strokeWidth="2" />
        </svg>
      </div>
      <div className="ml-[3px] flex">
        <TaskItem><I><path d="M8 1h22v21H8z" fill="#fbfbfb" /><path d="M1 9h22v21H1z" fill="#333" /><path d="M8 9h15v13H8z" fill="#b5b5b5" /></I></TaskItem>
        <TaskItem><I><path d="M0 3q0-2 2-2h9l3 3h14q2 0 2 2v4H0z" fill="#d99a08" /><path d="M0 6h30v20q0 2-2 2H2q-2 0-2-2z" fill="#fcc934" /><path d="M5 28v-5q0-2 2-2h16q2 0 2 2v5z" fill="#1478c8" /><path d="M9 25h12" stroke="#0a4f96" strokeWidth="1.200" /></I></TaskItem>
        <TaskItem dot="w-2"><I><path d="M0 15C0 6 7 0 15 0c9 0 15 6 15 12.500C30 18 26 21 21.500 21c-3 0-4.500-1.500-3-3.500C20 15 17.500 11 13 10.500 6 10 3 16 4 21 1.500 20 0 17 0 15z" fill="url(#edge)" /><path d="M0 15c0-5 4-7.500 9-7.500 6.500 0 10 4 9.500 7-1.500-2.500-6.500-2-6.500 3 0 5 5 8 10 7.500 2.500 0 4.500-1 6.500-2.500C25 27 20.500 30 15 30 6 30 0 23 0 15z" fill="#0d78d0" /><path d="M10 12.500C7 20 12 29 20 28.500 15 31 6.500 28 5.500 21c-.5-4 1.500-7.500 4.500-8.500z" fill="#0f5fb0" /><path d="M12 17.500c0 5 5 8 10 7.500 2.500 0 4.500-1 6.500-2.500-2.500 4-6.500 6.500-11 6.800C11 27 9 20 12 17.500z" fill="#0c4a98" /></I></TaskItem>
        <TaskItem><I><path d="M9 6V1h13v5" stroke="#1fb4f0" strokeWidth="2.200" fill="none" /><path d="M1 6q0-1 1-1h27q1 0 1 1v20q0 4-4 4H5q-4 0-4-4z" fill="#154f8a" /><path d="M10 12h5v5h-5z" fill="#f25022" /><path d="M16 12h5v5h-5z" fill="#7fba00" /><path d="M10 18h5v5h-5z" fill="#00a4ef" /><path d="M16 18h5v5h-5z" fill="#ffb900" /></I></TaskItem>
        <TaskItem><div className="grid size-[30px] place-items-center rounded-[2px] bg-[#0096d6] text-[11px] font-semibold italic leading-none tracking-[-0.5px] text-white"><span><span className="text-[9px] font-normal not-italic">my</span><span className="text-[13px]">hp</span></span></div></TaskItem>
        <TaskItem><div className="relative"><div className="grid size-[30px] place-items-center rounded-full border-2 border-[#f4f4f4] bg-[#0096d6] text-[24px] font-bold leading-none text-white">?</div><div className="absolute -top-[7px] left-[16px] grid size-5 place-items-center rounded-full bg-[#d83b01] text-[16px] font-extrabold leading-none text-white">!</div></div></TaskItem>
        <TaskItem><I><path d="M3 10L16 2l13 8v18q0 1-1 1H6q-3 0-3-3z" fill="#0f7ad8" /><path d="M10 12l16-6 3 4v4l-13 8z" fill="#123f80" /><path d="M6 28l23-14v13q0 2-2 2H8z" fill="#35c0f0" /><rect x="0" y="10" width="15" height="15" rx="1.500" fill="#0b5cb8" /><circle cx="7.500" cy="17.500" r="4" fill="none" stroke="#fff" strokeWidth="2.200" /></I></TaskItem>
        <TaskItem><I><path d="M9 1h9q3 0 4 3l1 4h-4q-3 0-4 4l-3 9q-1 3-4 3H4q-5 0-4-6L4 5q1-4 5-4z" fill="url(#cop1)" /><path d="M15 1h4q3 0 4 4l1 3h-6z" fill="#1c4fc8" /><path d="M21 29h-9q-3 0-4-3l-1-4h4q3 0 4-4l3-9q1-3 4-3h4q5 0 4 6l-4 13q-1 4-5 4z" fill="url(#cop2)" /></I></TaskItem>
        <TaskItem dot="w-2"><I><path d="M8 1h22v7H8z" fill="#41a5ee" /><path d="M8 8h22v7H8z" fill="#2b7cd3" /><path d="M8 15h22v7H8z" fill="#185abd" /><path d="M8 22h22v7H8z" fill="#103f91" /><rect x="0" y="7" width="16" height="16" rx="1.500" fill="#1552b0" /><path d="M3 11l2.300 8L8 12l2.700 7L13 11" fill="none" stroke="#fff" strokeWidth="1.900" /></I></TaskItem>
        <TaskItem dot="w-2"><I><path d="M15 15L2 7.500A15 15 0 0128 7.500z" fill="#e33b2e" /><path d="M15 15v15A15 15 0 012 7.500z" fill="#1fa351" /><path d="M15 8h13.200A15 15 0 0115 30l6.500-11.500z" fill="#fcc92e" /><circle cx="15" cy="15" r="7" fill="#fff" /><circle cx="15" cy="15" r="5.500" fill="#1a73e8" /></I></TaskItem>
        <TaskItem dot="w-2"><I><path d="M1 2.500l5.500 20q1.500 5 5.500 5.500h3V20h-2.500L8.500 8.500V4h7" fill="none" stroke="#0c7288" strokeWidth="3" /><path d="M29 16H19v4.500h9.500v7H18" fill="none" stroke="#0c7288" strokeWidth="3" /><path d="M18.500 10.500V7q0-4 4-4h6v7.500z" fill="none" stroke="#f39a1e" strokeWidth="3" /></I></TaskItem>
        <TaskItem dot="w-2"><I><rect width="30" height="30" fill="#3a2e36" /><path d="M2 30Q-1 18 8 12q10-2 18-9 3 6-1 13 3 8 2 14z" fill="#e02010" /><path d="M12 12q10-1 15-9 1 8-7 15z" fill="#ff6a58" /><rect x="0" y="1" width="17" height="10" rx="1.500" fill="#d5d5d5" /><text x="1" y="9.500" fontSize="9" fontWeight="700" fill="#111" fontFamily="Open Sans">x64</text></I></TaskItem>
        <TaskItem dot="w-[19px]"><I><rect x="0" y="4" width="22" height="22" rx="2" fill="#f2f2f2" /><path d="M4 20V8.500h13" fill="none" stroke="#d84a1a" strokeWidth="3" strokeDasharray="3 1.200" /><path d="M17 11v17M12 21.500h13" stroke="#8a8f96" strokeWidth="2.600" /><circle cx="27" cy="20" r="2.600" fill="none" stroke="#2a9be0" strokeWidth="2" /><circle cx="16" cy="31.500" r="2.600" fill="none" stroke="#2a9be0" strokeWidth="2" /></I></TaskItem>
      </div>
      <div className="ml-auto mr-[11px] flex h-[58px] items-center text-[#1c1c1c]">
        <ChevronUp className="size-[22px]" strokeWidth={2} />
        <svg viewBox="0 0 21 15" className="ml-[18px] h-[15px] w-[21px]"><path d="M5 13.800a4 4 0 01-.8-8A6 6 0 0115.500 5a4.500 4.500 0 01.8 8.800z" fill="#eee" stroke="#222" strokeWidth="1.400" /><path d="M4 6a6 6 0 0111-1.500l2 1L5 11z" fill="#8f8f8f" /></svg>
        <Wifi className="ml-[18px] size-[23px]" strokeWidth={1.700} />
        <Volume2 className="ml-[8px] size-[22px]" strokeWidth={1.500} />
        <svg viewBox="0 0 21 17" className="ml-[8px] h-[17px] w-[21px]"><rect x="1" y="5" width="17" height="10.500" rx="2.500" fill="none" stroke="#1c1c1c" strokeWidth="1.500" /><path d="M5 7.500h11v6H3z" fill="#1c1c1c" /><path d="M18 8h2.500v4.500H18z" fill="#1c1c1c" /><path d="M5.500-.500L1 6h3l-1 4.500L7.500 4.500H5z" fill="#1c1c1c" stroke="#dadada" strokeWidth=".6" /></svg>
        <div className="ml-[10px] w-[88px] text-right text-[14px] leading-5 tracking-[0.3px]"><div>1:18 PM</div><div>10/16/2024</div></div>
        <svg viewBox="0 0 16 19" className="ml-[11px] h-[19px] w-4"><path d="M8 0q6 0 6 6v6l2 3H0l2-3V6q0-6 6-6z" fill="#0a4fa6" /><path d="M5.500 16.500h5q-.5 2-2.500 2t-2.500-2z" fill="#0a4fa6" /></svg>
      </div>
    </div>
  );
}

export default function App() {
  return (
    <div className="relative h-[1199px] w-[1581px] overflow-hidden bg-black">
      <Gradients />
      <Wallpaper />
      <Manager />
      <VmWindow />
      <Taskbar />
    </div>
  );
}
